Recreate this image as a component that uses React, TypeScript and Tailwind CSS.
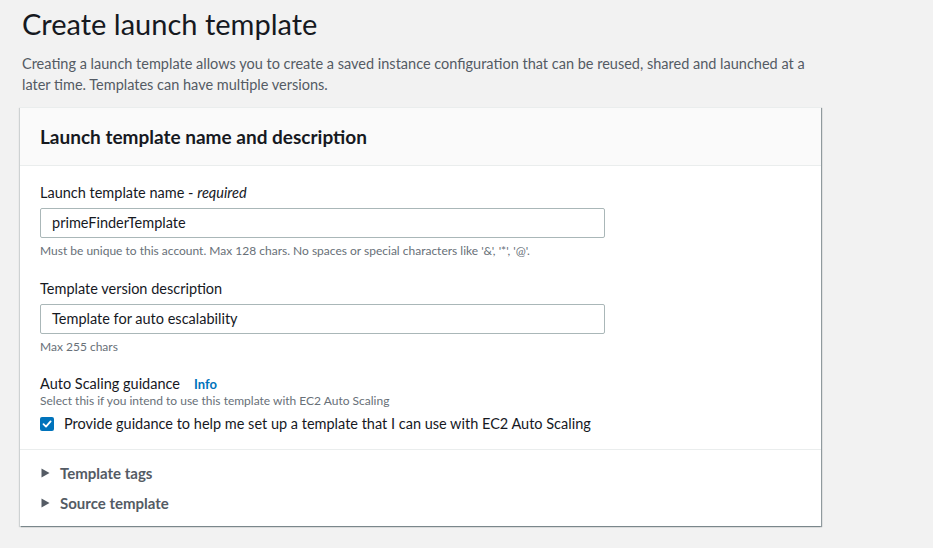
export default function App() {
  return (
    <div
      className="min-h-[548px] bg-[#f2f2f2] px-5 pt-[6px] text-[#16191f]"
      style={{ fontFamily: 'Lato, "Open Sans", sans-serif' }}
    >
      <div className="w-[801px]">
        {/* Page header */}
        <h1 className="text-[29px] leading-[36px] text-[#16191f] pl-[2px]">Create launch template</h1>
        <p className="mt-[11px] pl-[2px] pr-[10px] text-[14.5px] leading-[21px] text-[#545b64]">
          Creating a launch template allows you to create a saved instance configuration that can be reused, shared and launched at a
          later time. Templates can have multiple versions.
        </p>

        {/* Card */}
        <div className="mt-[12px] bg-white shadow-[1px_1px_1px_0_rgba(0,28,36,0.3),1px_1px_1px_0_rgba(0,28,36,0.15),-1px_1px_1px_0_rgba(0,28,36,0.15)] border-t border-[#eaeded]">
          <div className="bg-[#fafafa] border-b border-[#eaeded] px-5 h-[58px] flex items-center">
            <h2 className="pt-[2px] text-[19px] font-bold text-[#16191f]">Launch template name and description</h2>
          </div>

          <div className="px-5 pt-[18px] pb-[16px]">
            <div className="text-[14.5px] leading-[18px]">
              Launch template name - <i>required</i>
            </div>
            <div className="mt-[6px] w-[565px] h-[30px] border border-[#aab7b8] rounded-[2px] px-[11px] flex items-center text-[14.5px]">
              primeFinderTemplate
            </div>
            <div className="mt-[5px] text-[12px] leading-[16px] text-[#687078]">
              Must be unique to this account. Max 128 chars. No spaces or special characters like '&amp;', '*', '@'.
            </div>

            <div className="mt-[21px] text-[14.5px] leading-[18px]">Template version description</div>
            <div className="mt-[6px] w-[565px] h-[30px] border border-[#aab7b8] rounded-[2px] px-[11px] flex items-center text-[14.5px]">
              Template for auto escalability
            </div>
            <div className="mt-[5px] text-[12px] leading-[16px] text-[#687078]">Max 255 chars</div>

            <div className="mt-[20px] flex items-center text-[14.5px] leading-[18px]">
              <span>Auto Scaling guidance</span>
              <span className="ml-[14px] text-[13px] font-bold text-[#0073bb]">Info</span>
            </div>
            <div className="mt-0 text-[12px] leading-[16px] text-[#687078]">
              Select this if you intend to use this template with EC2 Auto Scaling
            </div>
            <div className="mt-[6px] flex items-center gap-[10px] text-[14.5px] leading-[18px]">
              <span className="w-[14px] h-[14px] rounded-[2px] bg-[#0073bb] flex items-center justify-center">
                <svg width="10" height="10" viewBox="0 0 10 10" fill="none">
                  <path d="M1.5 5.2 L4 7.6 L8.6 2.4" stroke="white" strokeWidth="1.8" strokeLinecap="round" strokeLinejoin="round" />
                </svg>
              </span>
              <span>Provide guidance to help me set up a template that I can use with EC2 Auto Scaling</span>
            </div>
          </div>

          <div className="border-t border-[#eaeded] px-5 pt-[14px] pb-[14px] flex flex-col gap-[12px]">
            {['Template tags', 'Source template'].map((t) => (
              <div key={t} className="flex items-center gap-[10px] text-[15px] leading-[18px] font-bold text-[#545b64]">
                <svg width="9" height="10" viewBox="0 0 9 10" className="ml-[1px]">
                  <path d="M0.5 0.5 L8.5 5 L0.5 9.5 Z" fill="#545b64" />
                </svg>
                <span>{t}</span>
              </div>
            ))}
          </div>
        </div>
      </div>
    </div>
  );
}
